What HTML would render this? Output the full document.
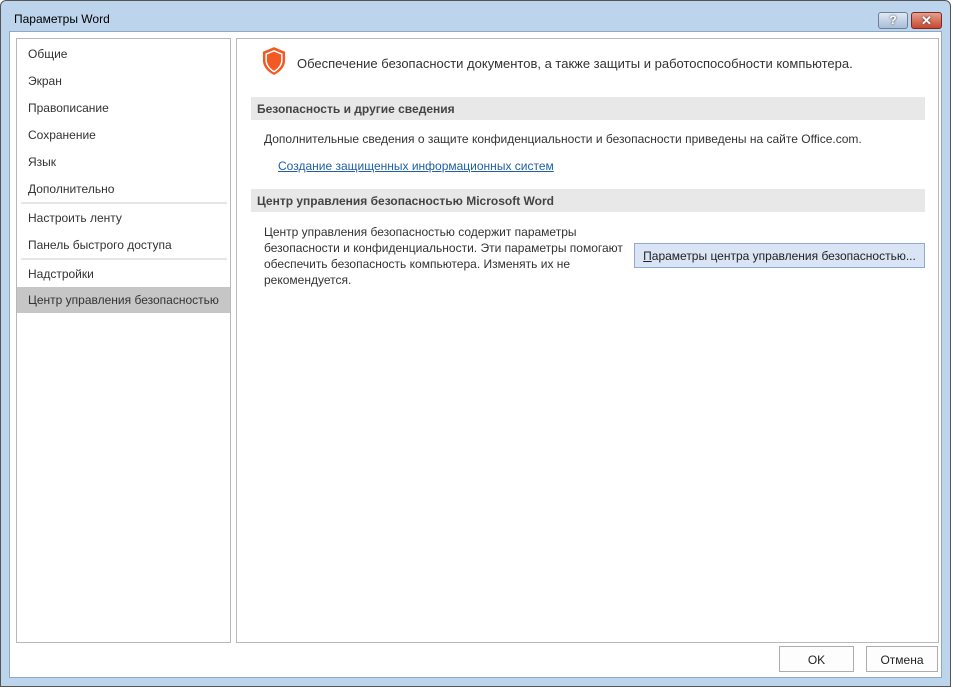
<!DOCTYPE html>
<html><head><meta charset="utf-8"><style>
*{margin:0;padding:0;box-sizing:border-box}
body{width:953px;height:688px;background:#fff;font-family:"Liberation Sans",sans-serif;font-size:12px;color:#333;position:relative;overflow:hidden}
.frame{position:absolute;left:0;top:0;width:951px;height:687px;background:#bcd4ec;border:1px solid #555;border-radius:6px 6px 0 0}
.title{position:absolute;left:14px;top:12px;font-size:12px;color:#000}
.client{position:absolute;left:9px;top:31px;width:933px;height:647px;background:#fff;border:1px solid #8ea9c6}
.pane{position:absolute;border:1px solid #b8b8b8;background:#fff}
.nav div{position:absolute;left:11px;font-size:12px;color:#333}
.nav .sep{position:absolute;left:4px;width:206px;height:2px;background:#e6e6e6}
.hdr{position:absolute;left:14px;width:674px;height:23px;background:#e8e8e8;font-weight:bold;font-size:12px;color:#444;padding:5px 0 0 6px}
.btn{position:absolute;border:1px solid #adadad;background:#fdfdfd;text-align:center;font-size:12px;color:#222;padding-top:6px}
</style></head><body>
<div class="frame"></div>
<div class="title">Параметры Word</div>
<div style="position:absolute;left:878px;top:12px;width:30px;height:17px;border:1px solid #6d7f95;border-radius:3px;background:linear-gradient(#dfe9f5,#a9bdd6);color:#fff;font-weight:bold;text-align:center;font-size:12px;line-height:15px;text-shadow:0 0 2px #333">?</div>
<div style="position:absolute;left:911px;top:12px;width:31px;height:17px;border:1px solid #7a2a22;border-radius:3px;background:linear-gradient(#e6a08f,#c7472f);color:#fff;font-weight:bold;text-align:center;font-size:13px;line-height:15px;text-shadow:0 0 2px #333">✕</div>
<div class="client"></div>
<div class="pane nav" style="left:16px;top:38px;width:215px;height:605px">
<div style="top:8px">Общие</div>
<div style="top:35px">Экран</div>
<div style="top:62px">Правописание</div>
<div style="top:89px">Сохранение</div>
<div style="top:116px">Язык</div>
<div style="top:143px">Дополнительно</div>
<div class="sep" style="top:163px"></div>
<div style="top:172px">Настроить ленту</div>
<div style="top:199px">Панель быстрого доступа</div>
<div class="sep" style="top:219px"></div>
<div style="top:228px">Надстройки</div>
<div style="left:0;top:248px;width:213px;height:26px;background:#c6c6c6"></div>
<div style="top:254px">Центр управления безопасностью</div>
</div>
<div class="pane" style="left:236px;top:38px;width:703px;height:605px">
<svg style="position:absolute;left:25px;top:7px" width="24" height="30" viewBox="0 0 26 32"><path d="M13 1 L25 6 L25 15 C25 23 19 28 13 31 C7 28 1 23 1 15 L1 6 Z" fill="#f25a24"/><path d="M13 5 L21.5 8.5 L21.5 15 C21.5 21 17 25 13 27.5 C9 25 4.5 21 4.5 15 L4.5 8.5 Z" fill="none" stroke="#fff" stroke-width="1.6"/></svg>
<div style="position:absolute;left:60px;top:17px;font-size:13px;color:#333">Обеспечение безопасности документов, а также защиты и работоспособности компьютера.</div>
<div class="hdr" style="top:58px">Безопасность и другие сведения</div>
<div style="position:absolute;left:27px;top:93px">Дополнительные сведения о защите конфиденциальности и безопасности приведены на сайте Office.com.</div>
<div style="position:absolute;left:41px;top:120px;color:#1f5fa5;text-decoration:underline">Создание защищенных информационных систем</div>
<div class="hdr" style="top:150px">Центр управления безопасностью Microsoft Word</div>
<div style="position:absolute;left:27px;top:185px;width:370px;line-height:16px">Центр управления безопасностью содержит параметры безопасности и конфиденциальности. Эти параметры помогают обеспечить безопасность компьютера. Изменять их не рекомендуется.</div>
<div style="position:absolute;left:397px;top:204px;width:291px;height:25px;border:1px solid #8fa8d4;background:#d9e4f5;text-align:center;padding-top:5px;color:#222"><u>П</u>араметры центра управления безопасностью...</div>
</div>
<div class="btn" style="left:779px;top:646px;width:75px;height:26px">OK</div>
<div class="btn" style="left:866px;top:646px;width:72px;height:26px">Отмена</div>
</body></html>
